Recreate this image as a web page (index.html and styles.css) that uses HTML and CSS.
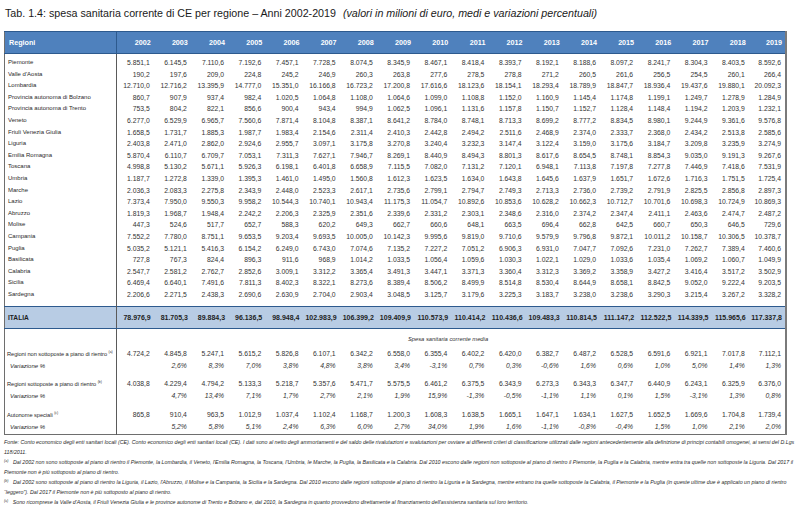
FILE: index.html
```html
<!DOCTYPE html>
<html lang="it">
<head>
<meta charset="utf-8">
<title>Tab. 1.4</title>
<link rel="stylesheet" href="styles.css">
</head>
<body>
<div class="title">Tab. 1.4: spesa sanitaria corrente di CE per regione – Anni 2002-2019<span class="unit">(valori in milioni di euro, medi e variazioni percentuali)</span></div>
<table class="tbl">
<colgroup><col class="c1"><col span="18"></colgroup>
<thead>
<tr><th class="lab">Regioni</th><th>2002</th><th>2003</th><th>2004</th><th>2005</th><th>2006</th><th>2007</th><th>2008</th><th>2009</th><th>2010</th><th>2011</th><th>2012</th><th>2013</th><th>2014</th><th>2015</th><th>2016</th><th>2017</th><th>2018</th><th>2019</th></tr>
</thead>
<tbody>
<tr class="first"><td class="lab">Piemonte</td><td>5.851,1</td><td>6.145,5</td><td>7.110,6</td><td>7.192,6</td><td>7.457,1</td><td>7.728,5</td><td>8.074,5</td><td>8.345,9</td><td>8.467,1</td><td>8.418,4</td><td>8.393,7</td><td>8.192,1</td><td>8.188,6</td><td>8.097,2</td><td>8.241,7</td><td>8.304,3</td><td>8.403,5</td><td>8.592,6</td></tr>
<tr><td class="lab">Valle d'Aosta</td><td>190,2</td><td>197,6</td><td>209,0</td><td>224,8</td><td>245,2</td><td>246,9</td><td>260,3</td><td>263,8</td><td>277,6</td><td>278,5</td><td>278,8</td><td>271,2</td><td>260,5</td><td>261,6</td><td>256,5</td><td>254,5</td><td>260,1</td><td>266,4</td></tr>
<tr><td class="lab">Lombardia</td><td>12.710,0</td><td>12.716,2</td><td>13.395,9</td><td>14.777,0</td><td>15.351,0</td><td>16.166,8</td><td>16.723,2</td><td>17.200,8</td><td>17.616,6</td><td>18.123,6</td><td>18.154,1</td><td>18.293,4</td><td>18.789,9</td><td>18.847,7</td><td>18.936,4</td><td>19.437,6</td><td>19.880,1</td><td>20.092,3</td></tr>
<tr><td class="lab">Provincia autonoma di Bolzano</td><td>860,7</td><td>907,9</td><td>937,4</td><td>982,4</td><td>1.020,5</td><td>1.064,8</td><td>1.108,0</td><td>1.064,6</td><td>1.099,0</td><td>1.108,8</td><td>1.152,0</td><td>1.160,9</td><td>1.145,4</td><td>1.174,8</td><td>1.199,1</td><td>1.249,7</td><td>1.278,9</td><td>1.284,9</td></tr>
<tr><td class="lab">Provincia autonoma di Trento</td><td>753,5</td><td>804,2</td><td>822,1</td><td>856,6</td><td>900,4</td><td>943,4</td><td>994,9</td><td>1.062,5</td><td>1.096,1</td><td>1.131,6</td><td>1.157,8</td><td>1.150,7</td><td>1.152,7</td><td>1.128,4</td><td>1.148,4</td><td>1.194,2</td><td>1.203,9</td><td>1.232,1</td></tr>
<tr><td class="lab">Veneto</td><td>6.277,0</td><td>6.529,9</td><td>6.965,7</td><td>7.560,6</td><td>7.871,4</td><td>8.104,8</td><td>8.387,1</td><td>8.641,2</td><td>8.784,0</td><td>8.748,1</td><td>8.713,3</td><td>8.699,2</td><td>8.777,2</td><td>8.834,5</td><td>8.980,1</td><td>9.244,9</td><td>9.361,6</td><td>9.576,8</td></tr>
<tr><td class="lab">Friuli Venezia Giulia</td><td>1.658,5</td><td>1.731,7</td><td>1.885,3</td><td>1.987,7</td><td>1.983,4</td><td>2.154,6</td><td>2.311,4</td><td>2.410,3</td><td>2.442,8</td><td>2.494,2</td><td>2.511,6</td><td>2.468,9</td><td>2.374,0</td><td>2.333,7</td><td>2.368,0</td><td>2.434,2</td><td>2.513,8</td><td>2.585,6</td></tr>
<tr><td class="lab">Liguria</td><td>2.403,8</td><td>2.471,0</td><td>2.862,0</td><td>2.924,6</td><td>2.955,7</td><td>3.097,1</td><td>3.175,8</td><td>3.270,8</td><td>3.240,4</td><td>3.232,3</td><td>3.147,4</td><td>3.122,4</td><td>3.159,0</td><td>3.175,6</td><td>3.184,7</td><td>3.209,8</td><td>3.235,9</td><td>3.274,9</td></tr>
<tr><td class="lab">Emilia Romagna</td><td>5.870,4</td><td>6.110,7</td><td>6.709,7</td><td>7.053,1</td><td>7.311,3</td><td>7.627,1</td><td>7.946,7</td><td>8.269,1</td><td>8.440,9</td><td>8.494,3</td><td>8.801,3</td><td>8.617,6</td><td>8.654,5</td><td>8.748,1</td><td>8.854,3</td><td>9.035,0</td><td>9.191,3</td><td>9.267,6</td></tr>
<tr><td class="lab">Toscana</td><td>4.998,8</td><td>5.130,2</td><td>5.671,1</td><td>5.926,3</td><td>6.198,1</td><td>6.401,8</td><td>6.658,9</td><td>7.115,5</td><td>7.082,0</td><td>7.131,2</td><td>7.120,1</td><td>6.948,1</td><td>7.113,8</td><td>7.197,8</td><td>7.277,8</td><td>7.446,9</td><td>7.418,6</td><td>7.531,9</td></tr>
<tr><td class="lab">Umbria</td><td>1.187,7</td><td>1.272,8</td><td>1.339,0</td><td>1.395,3</td><td>1.461,0</td><td>1.495,0</td><td>1.560,8</td><td>1.612,3</td><td>1.623,5</td><td>1.634,0</td><td>1.643,8</td><td>1.645,6</td><td>1.637,9</td><td>1.651,7</td><td>1.672,6</td><td>1.716,3</td><td>1.751,5</td><td>1.725,4</td></tr>
<tr><td class="lab">Marche</td><td>2.036,3</td><td>2.083,3</td><td>2.275,8</td><td>2.343,9</td><td>2.448,0</td><td>2.523,3</td><td>2.617,1</td><td>2.735,6</td><td>2.799,1</td><td>2.794,7</td><td>2.749,3</td><td>2.713,3</td><td>2.736,0</td><td>2.739,2</td><td>2.791,9</td><td>2.825,5</td><td>2.856,8</td><td>2.897,3</td></tr>
<tr><td class="lab">Lazio</td><td>7.373,4</td><td>7.950,0</td><td>9.550,3</td><td>9.958,2</td><td>10.544,3</td><td>10.740,1</td><td>10.943,4</td><td>11.175,3</td><td>11.054,7</td><td>10.892,6</td><td>10.853,6</td><td>10.628,2</td><td>10.662,3</td><td>10.712,7</td><td>10.701,6</td><td>10.698,3</td><td>10.724,9</td><td>10.869,3</td></tr>
<tr><td class="lab">Abruzzo</td><td>1.819,3</td><td>1.968,7</td><td>1.948,4</td><td>2.242,2</td><td>2.206,3</td><td>2.325,9</td><td>2.351,6</td><td>2.339,6</td><td>2.331,2</td><td>2.303,1</td><td>2.348,6</td><td>2.316,0</td><td>2.374,2</td><td>2.347,4</td><td>2.411,1</td><td>2.463,6</td><td>2.474,7</td><td>2.487,2</td></tr>
<tr><td class="lab">Molise</td><td>447,3</td><td>524,6</td><td>517,7</td><td>652,7</td><td>588,3</td><td>620,2</td><td>649,3</td><td>662,7</td><td>660,6</td><td>648,1</td><td>663,5</td><td>696,4</td><td>662,8</td><td>642,5</td><td>660,7</td><td>650,3</td><td>646,5</td><td>729,6</td></tr>
<tr><td class="lab">Campania</td><td>7.552,2</td><td>7.780,0</td><td>8.751,1</td><td>9.653,5</td><td>9.203,4</td><td>9.693,5</td><td>10.005,0</td><td>10.142,3</td><td>9.995,6</td><td>9.819,0</td><td>9.710,6</td><td>9.579,9</td><td>9.796,8</td><td>9.872,1</td><td>10.011,2</td><td>10.158,7</td><td>10.306,5</td><td>10.378,7</td></tr>
<tr><td class="lab">Puglia</td><td>5.035,2</td><td>5.121,1</td><td>5.416,3</td><td>6.154,2</td><td>6.249,0</td><td>6.743,0</td><td>7.074,6</td><td>7.135,2</td><td>7.227,2</td><td>7.051,2</td><td>6.906,3</td><td>6.931,0</td><td>7.047,7</td><td>7.092,6</td><td>7.231,0</td><td>7.262,7</td><td>7.389,4</td><td>7.460,6</td></tr>
<tr><td class="lab">Basilicata</td><td>727,8</td><td>767,3</td><td>824,4</td><td>896,3</td><td>911,6</td><td>968,9</td><td>1.014,2</td><td>1.033,5</td><td>1.056,4</td><td>1.059,6</td><td>1.030,3</td><td>1.022,1</td><td>1.029,0</td><td>1.033,6</td><td>1.035,4</td><td>1.069,2</td><td>1.060,7</td><td>1.049,9</td></tr>
<tr><td class="lab">Calabria</td><td>2.547,7</td><td>2.581,2</td><td>2.762,7</td><td>2.852,6</td><td>3.009,1</td><td>3.312,2</td><td>3.365,4</td><td>3.491,3</td><td>3.447,1</td><td>3.371,3</td><td>3.360,4</td><td>3.312,3</td><td>3.369,2</td><td>3.358,9</td><td>3.427,2</td><td>3.416,4</td><td>3.517,2</td><td>3.502,9</td></tr>
<tr><td class="lab">Sicilia</td><td>6.469,4</td><td>6.640,1</td><td>7.491,6</td><td>7.811,3</td><td>8.402,3</td><td>8.322,1</td><td>8.273,6</td><td>8.389,4</td><td>8.506,2</td><td>8.499,9</td><td>8.514,8</td><td>8.530,4</td><td>8.644,9</td><td>8.658,1</td><td>8.842,5</td><td>9.052,0</td><td>9.222,4</td><td>9.203,5</td></tr>
<tr class="last"><td class="lab">Sardegna</td><td>2.206,6</td><td>2.271,5</td><td>2.438,3</td><td>2.690,6</td><td>2.630,9</td><td>2.704,0</td><td>2.903,4</td><td>3.048,5</td><td>3.125,7</td><td>3.179,6</td><td>3.225,3</td><td>3.183,7</td><td>3.238,0</td><td>3.238,6</td><td>3.290,3</td><td>3.215,4</td><td>3.267,2</td><td>3.328,2</td></tr>
<tr class="it"><td class="lab">ITALIA</td><td>78.976,9</td><td>81.705,3</td><td>89.884,3</td><td>96.136,5</td><td>98.948,4</td><td>102.983,9</td><td>106.399,2</td><td>109.409,9</td><td>110.573,9</td><td>110.414,2</td><td>110.436,6</td><td>109.483,3</td><td>110.814,5</td><td>111.147,2</td><td>112.522,5</td><td>114.339,5</td><td>115.965,6</td><td>117.337,8</td></tr>
<tr class="cap"><td class="lab"></td><td colspan="18">Spesa sanitaria corrente media</td></tr>
<tr class="grp g1"><td class="lab">Regioni non sottoposte a piano di rientro <sup>(a)</sup></td><td>4.724,2</td><td>4.845,8</td><td>5.247,1</td><td>5.615,2</td><td>5.826,8</td><td>6.107,1</td><td>6.342,2</td><td>6.558,0</td><td>6.355,4</td><td>6.402,2</td><td>6.420,0</td><td>6.382,7</td><td>6.487,2</td><td>6.528,5</td><td>6.591,6</td><td>6.921,1</td><td>7.017,8</td><td>7.112,1</td></tr>
<tr class="var"><td class="lab">Variazione %</td><td></td><td>2,6%</td><td>8,3%</td><td>7,0%</td><td>3,8%</td><td>4,8%</td><td>3,8%</td><td>3,4%</td><td>-3,1%</td><td>0,7%</td><td>0,3%</td><td>-0,6%</td><td>1,6%</td><td>0,6%</td><td>1,0%</td><td>5,0%</td><td>1,4%</td><td>1,3%</td></tr>
<tr class="grp g2"><td class="lab">Regioni sottoposte a piano di rientro <sup>(b)</sup></td><td>4.038,8</td><td>4.229,4</td><td>4.794,2</td><td>5.133,3</td><td>5.218,7</td><td>5.357,6</td><td>5.471,7</td><td>5.575,5</td><td>6.461,2</td><td>6.375,5</td><td>6.343,9</td><td>6.273,3</td><td>6.343,3</td><td>6.347,7</td><td>6.440,9</td><td>6.243,1</td><td>6.325,9</td><td>6.376,0</td></tr>
<tr class="var"><td class="lab">Variazione %</td><td></td><td>4,7%</td><td>13,4%</td><td>7,1%</td><td>1,7%</td><td>2,7%</td><td>2,1%</td><td>1,9%</td><td>15,9%</td><td>-1,3%</td><td>-0,5%</td><td>-1,1%</td><td>1,1%</td><td>0,1%</td><td>1,5%</td><td>-3,1%</td><td>1,3%</td><td>0,8%</td></tr>
<tr class="grp g3"><td class="lab">Autonome speciali <sup>(c)</sup></td><td>865,8</td><td>910,4</td><td>963,5</td><td>1.012,9</td><td>1.037,4</td><td>1.102,4</td><td>1.168,7</td><td>1.200,3</td><td>1.608,3</td><td>1.638,5</td><td>1.665,1</td><td>1.647,1</td><td>1.634,1</td><td>1.627,5</td><td>1.652,5</td><td>1.669,6</td><td>1.704,8</td><td>1.739,4</td></tr>
<tr class="var end"><td class="lab">Variazione %</td><td></td><td>5,2%</td><td>5,8%</td><td>5,1%</td><td>2,4%</td><td>6,3%</td><td>6,0%</td><td>2,7%</td><td>34,0%</td><td>1,9%</td><td>1,6%</td><td>-1,1%</td><td>-0,8%</td><td>-0,4%</td><td>1,5%</td><td>1,0%</td><td>2,1%</td><td>2,0%</td></tr>
</tbody>
</table>
<div class="notes">
<div class="ln">Fonte: Conto economico degli enti sanitari locali (CE). Conto economico degli enti sanitari locali (CE). I dati sono al netto degli ammortamenti e del saldo delle rivalutazioni e svalutazioni per ovviare ai differenti criteri di classificazione utilizzati dalle regioni antecedentemente alla definizione di principi contabili omogenei, ai sensi del D.Lgs</div>
<div class="ln">118/2011.</div>
<div class="ln"><sup>(a)</sup> Dal 2002 non sono sottoposte al piano di rientro il Piemonte, la Lombardia, il Veneto, l'Emilia Romagna, la Toscana, l'Umbria, le Marche, la Puglia, la Basilicata e la Calabria. Dal 2010 escono dalle regioni non sottoposte al piano di rientro il Piemonte, la Puglia e la Calabria, mentre entra tra quelle non sottoposte la Liguria. Dal 2017 il</div>
<div class="ln">Piemonte non è più sottoposto al piano di rientro.</div>
<div class="ln"><sup>(b)</sup> Dal 2002 sono sottoposte al piano di rientro la Liguria, il Lazio, l'Abruzzo, il Molise e la Campania, la Sicilia e la Sardegna. Dal 2010 escono dalle regioni sottoposte al piano di rientro la Liguria e la Sardegna, mentre entrano tra quelle sottoposte la Calabria, il Piemonte e la Puglia (in queste ultime due è applicato un piano di rientro</div>
<div class="ln">“leggero”). Dal 2017 il Piemonte non è più sottoposto al piano di rientro.</div>
<div class="ln"><sup>(c)</sup> Sono ricomprese la Valle d'Aosta, il Friuli Venezia Giulia e le province autonome di Trento e Bolzano e, dal 2010, la Sardegna in quanto provvedono direttamente al finanziamento dell'assistenza sanitaria sul loro territorio.</div>
</div>
</body>
</html>
```

FILE: styles.css
```css
html, body {
  margin: 0;
  background: #ffffff;
}
body {
  padding: 5px 0 0 4px;
  font-family: "Liberation Sans", Arial, sans-serif;
  color: #333333;
  overflow: hidden;
}
.title {
  font-size: 10.7px;
  line-height: 16px;
  color: #1a1a1a;
  white-space: nowrap;
  margin: 0 0 10px 1px;
}
.title .unit {
  font-style: italic;
  margin-left: 7px;
}
.tbl {
  border-collapse: collapse;
  table-layout: fixed;
  width: 783px;
  border: 1px solid #6e6e6e;
  border-right: 2px solid #7a7a7a;
}
.tbl col.c1 {
  width: 112px;
}
.tbl th {
  background: #4f81bd;
  color: #ffffff;
  font-weight: bold;
  font-size: 7.2px;
  height: 21px;
  padding: 0 3px 0 0;
  text-align: right;
  border-top: 1px solid #2d5a8e;
  border-bottom: 1px solid #2d5a8e;
}
.tbl th.lab {
  text-align: left;
  padding-left: 4px;
  border-right: 1px solid #2d5a8e;
}
.tbl td {
  font-size: 6.8px;
  line-height: 11.6px;
  padding: 0 4px 0 0;
  text-align: right;
  white-space: nowrap;
  overflow: hidden;
}
.tbl td.lab {
  text-align: left;
  padding-left: 3px;
  border-right: 1px solid #5a5a5a;
  font-size: 6px;
  color: #2a2a2a;
}
.tbl tr.first td {
  padding-top: 3px;
}
.tbl tr.last td {
  padding-bottom: 6px;
}
.tbl tr.it td {
  background: #b8cce4;
  color: #1e1e1e;
  font-weight: bold;
  font-size: 7px;
  height: 21px;
  padding-right: 3px;
  border-top: 1px solid #2d5a8e;
  border-bottom: 1px solid #2d5a8e;
}
.tbl tr.it td.lab {
  font-size: 6.6px;
}
.tbl tr.cap td {
  font-size: 5.8px;
  font-style: italic;
  text-align: center;
  line-height: 11px;
  padding: 5px 6px 3px 0;
}
.tbl tr.cap td.lab {
  padding: 0;
}
.tbl tr.grp td {
  line-height: 12px;
}
.tbl tr.grp td.lab {
  font-size: 5.7px;
  letter-spacing: -0.05px;
  padding-left: 2px;
}
.tbl tr.g2 td {
  padding-top: 6px;
}
.tbl tr.g3 td {
  padding-top: 7px;
}
.tbl tr.var td {
  font-style: italic;
  line-height: 12px;
}
.tbl tr.var td.lab {
  padding-left: 5px;
}
.tbl tr.end td {
  padding-bottom: 1px;
}
.tbl sup {
  font-size: 3.4px;
  vertical-align: 3px;
  line-height: 0;
}
.notes {
  margin-top: 2px;
  font-size: 5.3px;
  font-style: italic;
  line-height: 10px;
  color: #2a2a2a;
}
.notes .ln {
  white-space: nowrap;
}
.notes sup {
  font-size: 3.6px;
  vertical-align: 2px;
  line-height: 0;
  margin-right: 3px;
}
```
